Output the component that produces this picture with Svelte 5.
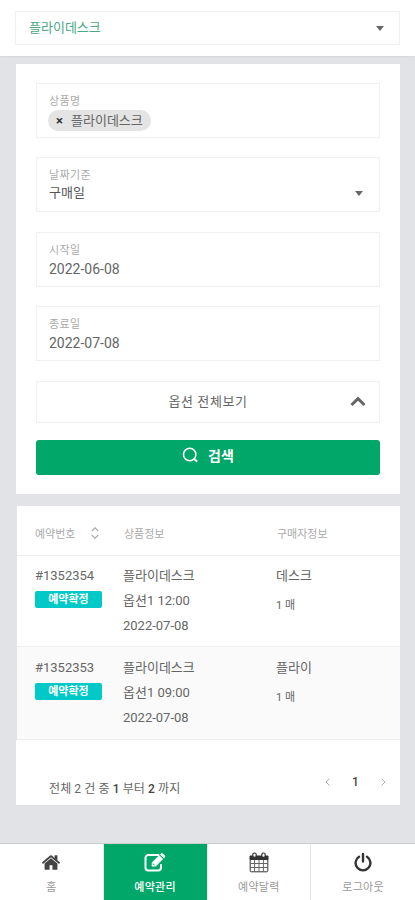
<script>
    let product = $state("플라이데스크");

    const dates = [
        { label: "시작일", value: "2022-06-08" },
        { label: "종료일", value: "2022-07-08" },
    ];

    const reservations = [
        {
            id: "#1352354",
            status: "예약확정",
            product: "플라이데스크",
            option: "옵션1 12:00",
            date: "2022-07-08",
            buyer: "데스크",
            count: "1 매",
        },
        {
            id: "#1352353",
            status: "예약확정",
            product: "플라이데스크",
            option: "옵션1 09:00",
            date: "2022-07-08",
            buyer: "플라이",
            count: "1 매",
        },
    ];

    const menu = [
        { name: "홈", icon: "home" },
        { name: "예약관리", icon: "edit", active: true },
        { name: "예약달력", icon: "calendar" },
        { name: "로그아웃", icon: "power" },
    ];
</script>

<div class="page">
    <header>
        <div class="shop-select">
            <span>{product}</span>
            <i class="caret"></i>
        </div>
    </header>

    <main>
        <section class="card search">
            <div class="field">
                <span class="label">상품명</span>
                <span class="chip"><b>×</b>{product}</span>
            </div>
            <div class="field select">
                <div>
                    <span class="label">날짜기준</span>
                    <span class="value">구매일</span>
                </div>
                <i class="caret"></i>
            </div>
            {#each dates as date}
                <div class="field">
                    <span class="label">{date.label}</span>
                    <span class="value date">{date.value}</span>
                </div>
            {/each}
            <div class="options">
                <span>옵션 전체보기</span>
                <svg width="16" height="11" viewBox="0 0 16 11">
                    <path d="M1.5 9 8 2.7 14.5 9" fill="none" stroke="#666" stroke-width="3" />
                </svg>
            </div>
            <button>
                <svg width="17" height="17" viewBox="0 0 17 17" fill="none" stroke="#fff">
                    <circle cx="7.7" cy="7.5" r="6.2" stroke-width="1.5" />
                    <path d="m12 11.8 3.2 3" stroke-width="2" />
                </svg>
                <span>검색</span>
            </button>
        </section>

        <section class="card list">
            <div class="row head">
                <span class="sortable">
                    예약번호
                    <svg width="8" height="12" viewBox="0 0 8 12" fill="none" stroke="#aaa" stroke-width="1.2">
                        <path d="M.7 4 4 .9 7.3 4M.7 8 4 11.1 7.3 8" />
                    </svg>
                </span>
                <span>상품정보</span>
                <span>구매자정보</span>
            </div>
            {#each reservations as item}
                <div class="row item">
                    <div>
                        <p>{item.id}</p>
                        <span class="badge">{item.status}</span>
                    </div>
                    <div>
                        <p>{item.product}</p>
                        <p>{item.option}</p>
                        <p>{item.date}</p>
                    </div>
                    <div>
                        <p>{item.buyer}</p>
                        <p class="count">{item.count}</p>
                    </div>
                </div>
            {/each}
        </section>
        <div class="pager">
            <p>전체 2 건 중 <b>1</b> 부터 <b>2</b> 까지</p>
            <div class="pages">
                <svg width="5" height="8" viewBox="0 0 5 8" fill="none" stroke="#aaa">
                    <path d="M4.4.7 1 4l3.4 3.3" />
                </svg>
                <b>1</b>
                <svg width="5" height="8" viewBox="0 0 5 8" fill="none" stroke="#aaa">
                    <path d="M.6.7 4 4 .6 7.3" />
                </svg>
            </div>
        </div>
    </main>

    <nav>
        {#each menu as item}
            <a href="#{item.icon}" class:active={item.active}>
                {#if item.icon === "home"}
                    <svg width="20" height="20" viewBox="0 0 1792 1792" fill="#444">
                        <path
                            d="M1472 992v480q0 26-19 45t-45 19h-384v-384h-256v384h-384q-26 0-45-19t-19-45v-480q0-1 .5-3t.5-3l575-474 575 474q1 2 1 6zm223-69l-62 74q-8 9-21 11h-3q-13 0-21-7l-692-577-692 577q-12 8-24 7-13-2-21-11l-62-74q-8-10-7-23.5t11-21.5l719-599q32-26 76-26t76 26l244 204v-195q0-14 9-23t23-9h192q14 0 23 9t9 23v408l219 182q10 8 11 21.5t-7 23.5z"
                        />
                    </svg>
                {:else if item.icon === "edit"}
                    <svg width="22" height="20" viewBox="0 0 22 20">
                        <path
                            d="M14.5 2.5H4.4A2.9 2.9 0 0 0 1.5 5.4v9.7A2.9 2.9 0 0 0 4.4 18h9.7a2.9 2.9 0 0 0 2.9-2.9v-2.6"
                            fill="none"
                            stroke="#fff"
                            stroke-width="2"
                            stroke-linecap="round"
                        />
                        <path d="m7.7 14.1.1-4 7.4-7.4 3.9 3.9-7.4 7.4zM16 1.9l1-1q.9-.8 1.8 0l2.1 2.1q.8.9 0 1.8l-1 1z" fill="#fff" />
                        <path d="m8.9 11.1 1.8 1.8" stroke="#00a769" />
                    </svg>
                {:else if item.icon === "calendar"}
                    <svg width="20" height="21" viewBox="0 0 20 21" fill="none" stroke="#333">
                        <path d="M1 4h18v3.5H1z" fill="#333" />
                        <path d="M1.2 7v11.8q0 1 1 1h15.6q1 0 1-1V7" />
                        <path d="M1 11.5h18M1 15.5h18M5.6 8v12M10 8v12M14.4 8v12" stroke="#666" />
                        <rect x="3.8" y="1" width="3.4" height="4.4" rx="1.6" fill="#fff" stroke-width="1.2" />
                        <rect x="12.8" y="1" width="3.4" height="4.4" rx="1.6" fill="#fff" stroke-width="1.2" />
                    </svg>
                {:else}
                    <svg width="18" height="20" viewBox="0 0 18 20" fill="none" stroke="#333" stroke-width="2.4" stroke-linecap="round">
                        <path d="M5 4.2a7.4 7.4 0 1 0 8 0M9 1.4v7.5" />
                    </svg>
                {/if}
                <span>{item.name}</span>
            </a>
        {/each}
    </nav>
</div>

<style>
    :global(body) {
        margin: 0;
        background: #e1e3e7;
    }

    .page {
        display: flex;
        flex-direction: column;
        height: 900px;
        font-family: Roboto, "Noto Sans CJK KR", sans-serif;
        font-size: 13px;
        color: #666;
    }

    .page,
    .page * {
        box-sizing: border-box;
    }

    p {
        margin: 0;
    }

    header {
        height: 56px;
        padding: 11px 15px 0;
        background: #fff;
        box-shadow: 0 1px 2px #d4d6da;
    }

    .shop-select {
        display: flex;
        align-items: center;
        justify-content: space-between;
        height: 34px;
        padding: 0 15px 0 13px;
        border: 1px solid #f0f0f0;
        color: #4da983;
    }

    .shop-select span {
        padding-bottom: 3px;
    }

    .caret {
        border: 4px solid transparent;
        border-top: 5px solid #666;
        border-bottom: 0;
    }

    main {
        flex: 1;
        padding: 8px 15px 0 16px;
    }

    .card {
        background: #fff;
    }

    .search {
        height: 430px;
        padding: 19px 20px 0;
    }

    .field {
        height: 55px;
        margin-bottom: 19.4px;
        padding: 10px 12px 0;
        border: 1px solid #f0f0f0;
    }

    .select {
        display: flex;
        justify-content: space-between;
        padding-right: 16px;
    }

    .select .caret {
        align-self: flex-start;
        margin-top: 23px;
    }

    .label {
        display: block;
        font-size: 11px;
        line-height: 16px;
        letter-spacing: 0.4px;
        color: #aaa;
    }

    .value {
        display: block;
        line-height: 18px;
        color: #555;
    }

    .date {
        font-size: 14px;
        line-height: 20px;
        color: #666;
    }

    .chip {
        display: flex;
        align-items: center;
        width: 103px;
        height: 21px;
        margin-left: -1px;
        padding: 0 0 2px 8px;
        border-radius: 11px;
        background: #e4e4e4;
        white-space: nowrap;
    }

    .chip b {
        width: 15px;
        padding-top: 2px;
        color: #333;
    }

    .options {
        display: flex;
        align-items: center;
        height: 42px;
        padding-right: 13px;
        border: 1px solid #f0f0f0;
    }

    .options span {
        flex: 1;
        padding: 0 0 2px 29px;
        letter-spacing: 0.6px;
        text-align: center;
    }

    button {
        display: flex;
        align-items: center;
        justify-content: center;
        gap: 9px;
        width: 100%;
        height: 35px;
        margin-top: 17px;
        padding: 0;
        border: 0;
        border-radius: 3px;
        background: #00a769;
        color: #fff;
        font: 700 14px Roboto, "Noto Sans CJK KR", sans-serif;
    }

    button svg {
        margin-top: -4px;
    }

    button span {
        padding-bottom: 4px;
    }

    .list {
        margin: 12px 0 0 1px;
    }

    .row {
        display: grid;
        grid-template-columns: 88px 153px 1fr;
        padding-left: 18px;
        border-bottom: 1px solid #efefef;
    }

    .head {
        align-items: center;
        height: 50px;
        padding-top: 5px;
        font-size: 11px;
        color: #aaa;
    }

    .head span:not(.sortable) {
        padding-left: 1px;
    }

    .sortable {
        display: flex;
        align-items: center;
        gap: 16px;
    }

    .item {
        height: 91px;
        padding-top: 7px;
        line-height: 25px;
    }

    .item:last-child {
        height: 93px;
        padding-top: 8px;
        background: #fafafa;
    }

    .badge {
        display: block;
        width: 67px;
        height: 17px;
        margin-top: 3px;
        border-radius: 2px;
        background: #00c9c8;
        color: #fff;
        font-size: 11px;
        font-weight: 700;
        line-height: 17px;
        text-align: center;
    }

    .item .count {
        margin-top: 5px;
        font-size: 11px;
    }

    .pager {
        display: flex;
        justify-content: space-between;
        height: 65px;
        padding: 37px 14px 0 33px;
        background: #fff;
        font-size: 12px;
        line-height: 24px;
        letter-spacing: 0.1px;
    }

    .pager b {
        font-weight: 500;
        color: #444;
    }

    .pages {
        display: flex;
        align-items: center;
        gap: 22px;
        height: 10px;
    }

    nav {
        display: grid;
        grid-template-columns: repeat(4, 1fr);
        height: 57px;
        border-top: 1px solid #ccc;
        background: #fff;
    }

    nav a {
        display: flex;
        flex-direction: column;
        align-items: center;
        padding-top: 8px;
        border-right: 1px solid #e8e8e8;
        color: #999;
        font-size: 11px;
        line-height: 16px;
        letter-spacing: 0.3px;
        text-decoration: none;
    }

    nav a:last-child {
        border-right: 0;
    }

    nav svg {
        height: 21px;
        margin-bottom: 7px;
    }

    nav .active {
        background: #00a769;
        color: #fff;
        font-weight: 500;
    }
</style>
